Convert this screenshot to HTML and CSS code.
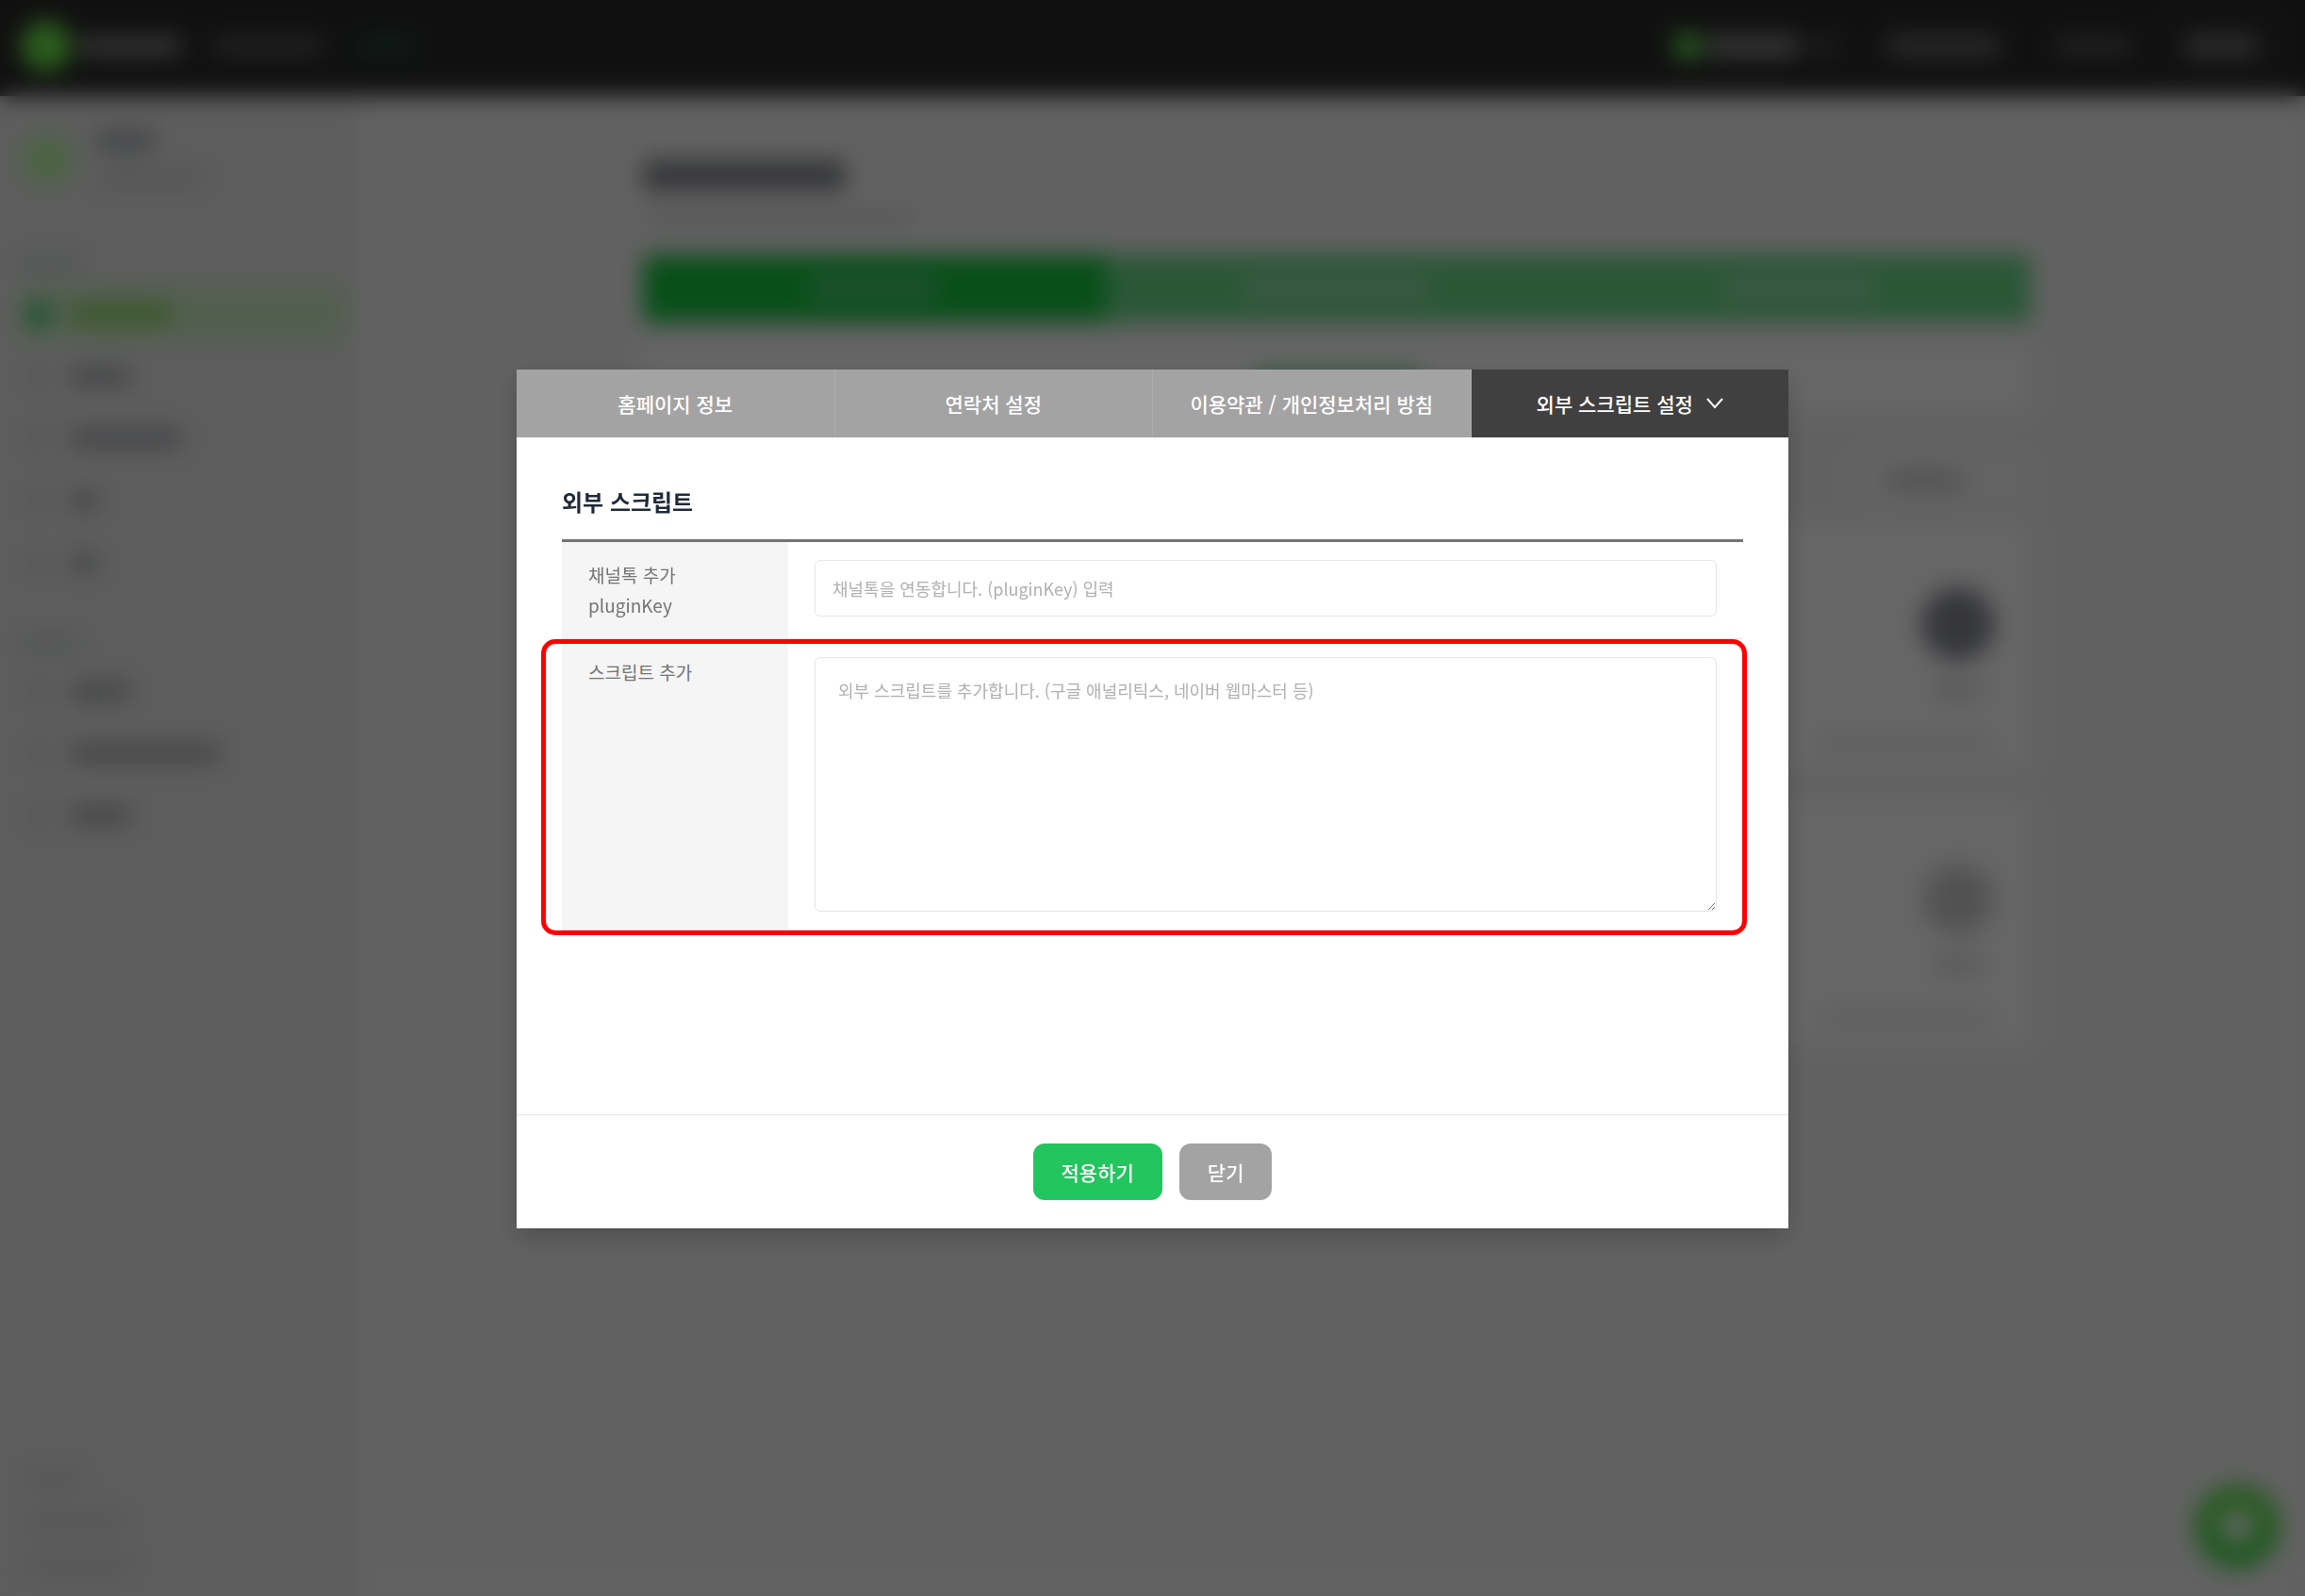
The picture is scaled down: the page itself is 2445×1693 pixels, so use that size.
FILE: index.html
```html
<!DOCTYPE html>
<html lang="ko">
<head>
    <meta charset="UTF-8">
    <meta name="viewport" content="width=device-width, initial-scale=1.0">
    <title>외부 스크립트 설정</title>
    <link rel="stylesheet" href="styles.css">
</head>
<body>
    <!-- Page behind the dialog -->
    <div class="page" aria-hidden="true">
        <header class="topbar">
            <span class="logo"></span>
            <span class="bar brand"></span>
            <span class="bar site-name"></span>
            <span class="bar plan"></span>
            <div class="topbar-right">
                <span class="points-dot"></span>
                <span class="bar points"></span>
                <span class="bar unit"></span>
                <span class="bar guide"></span>
                <span class="bar account"></span>
                <span class="logout"><span class="bar"></span></span>
            </div>
        </header>

        <div class="layout">
            <aside class="sidebar">
                <div class="profile">
                    <span class="avatar"></span>
                    <div class="profile-text">
                        <span class="bar name"></span>
                        <span class="bar mail"></span>
                    </div>
                </div>
                <div class="menu-title"><span class="bar"></span></div>
                <ul class="menu">
                    <li class="active"><i></i><span class="bar w110"></span></li>
                    <li><i></i><span class="bar w65"></span></li>
                    <li><i></i><span class="bar w120"></span></li>
                    <li><i></i><span class="bar w30"></span></li>
                    <li><i></i><span class="bar w30"></span></li>
                </ul>
                <div class="menu-title second"><span class="bar"></span></div>
                <ul class="menu">
                    <li><i></i><span class="bar w65"></span></li>
                    <li><i></i><span class="bar w160"></span></li>
                    <li><i></i><span class="bar w65"></span></li>
                </ul>
                <div class="sidebar-footer">
                    <span class="bar w65"></span>
                    <span class="bar w110"></span>
                    <span class="bar w120"></span>
                </div>
            </aside>

            <main class="main">
                <div class="content">
                    <div class="page-title"></div>
                    <div class="bar page-desc"></div>
                    <div class="page-tabs">
                        <div class="active"><span class="bar w140"></span></div>
                        <div><span class="bar w200"></span></div>
                        <div><span class="bar w160"></span></div>
                    </div>
                    <div class="notice"><span class="bar"></span></div>
                    <div class="filter"><span class="bar"></span></div>
                    <div class="card">
                        <div class="card-side">
                            <span class="circle dark"></span>
                            <span class="bar"></span>
                        </div>
                        <span class="bar card-date"></span>
                    </div>
                    <div class="card">
                        <div class="card-side">
                            <span class="circle"></span>
                            <span class="bar"></span>
                        </div>
                        <span class="bar card-date"></span>
                    </div>
                </div>
            </main>
        </div>
        <div class="chat"><span></span></div>
    </div>

    <!-- Dialog -->
    <div class="overlay">
        <form class="modal" role="dialog" aria-labelledby="modal-title">
            <nav class="tabs">
                <button type="button">홈페이지 정보</button>
                <button type="button">연락처 설정</button>
                <button type="button">이용약관 / 개인정보처리 방침</button>
                <button type="button" class="active">
                    외부 스크립트 설정
                    <svg width="18" height="12" viewBox="0 0 18 12" fill="none" stroke="#fff" stroke-width="2"><path d="M1 1l8 9 8-9"/></svg>
                </button>
            </nav>
            <div class="modal-body">
                <h2 id="modal-title">외부 스크립트</h2>
                <div class="form-table">
                    <div class="form-row">
                        <label for="plugin_key">채널톡 추가<br>pluginKey</label>
                        <div class="field">
                            <input type="text" id="plugin_key" name="plugin_key" placeholder="채널톡을 연동합니다. (pluginKey) 입력">
                        </div>
                    </div>
                    <div class="form-row highlighted">
                        <label for="script">스크립트 추가</label>
                        <div class="field">
                            <textarea id="script" name="script" placeholder="외부 스크립트를 추가합니다. (구글 애널리틱스, 네이버 웹마스터 등)"></textarea>
                        </div>
                    </div>
                </div>
            </div>
            <div class="modal-footer">
                <button type="submit" class="btn btn-primary">적용하기</button>
                <button type="button" class="btn">닫기</button>
            </div>
        </form>
    </div>
</body>
</html>
```
FILE: styles.css
```css
* {
    box-sizing: border-box;
}
body {
    margin: 0;
    font-family: "Noto Sans CJK KR", "Noto Sans", sans-serif;
    background: #f3f3f3;
    overflow: hidden;
}
button,
input,
textarea {
    font-family: inherit;
}

/* page behind */
.page {
    display: flex;
    flex-direction: column;
    height: 100vh;
}
.bar {
    display: block;
    height: 20px;
    border-radius: 10px;
    background: #acaeb3;
}
.w30 { width: 30px; }
.w65 { width: 65px; }
.w110 { width: 110px; }
.w120 { width: 120px; }
.w140 { width: 140px; }
.w160 { width: 160px; }
.w200 { width: 200px; }

.topbar {
    display: flex;
    align-items: center;
    flex: none;
    height: 102px;
    padding: 0 24px 4px 22px;
    background: #2a2a2a;
}
.logo {
    width: 54px;
    height: 54px;
    border-radius: 50%;
    background: #6fe84c;
}
.brand {
    width: 112px;
    height: 24px;
    margin-left: 6px;
    background: #787878;
}
.site-name {
    width: 120px;
    margin-left: 30px;
    background: #565656;
}
.plan {
    width: 60px;
    margin-left: 36px;
    background: #22483b;
}
.topbar-right {
    display: flex;
    align-items: center;
    margin-left: auto;
}
.points-dot {
    width: 30px;
    height: 30px;
    border-radius: 50%;
    background: #67e855;
}
.points {
    width: 100px;
    height: 24px;
    margin-left: 4px;
    background: #868686;
}
.unit {
    width: 36px;
    margin-left: 8px;
    background: #484848;
}
.guide {
    width: 124px;
    height: 24px;
    margin-left: 46px;
    background: #666;
}
.account {
    width: 84px;
    margin-left: 56px;
    background: #555;
}
.logout {
    margin-left: 28px;
    padding: 20px 24px;
    border: 1px solid #555;
    border-radius: 8px;
}
.logout .bar {
    width: 80px;
    height: 24px;
    background: #707070;
}

.layout {
    display: flex;
    flex: 1;
}
.sidebar {
    display: flex;
    flex-direction: column;
    width: 378px;
    padding: 37px 11px 23px 18px;
    background: #e8e8e8;
}
.profile {
    display: flex;
    align-items: center;
    gap: 22px;
    height: 60px;
    padding-left: 4px;
}
.avatar {
    width: 56px;
    height: 56px;
    border-radius: 50%;
    background: #bdf8aa;
}
.name {
    width: 66px;
    margin-bottom: 20px;
    background: #a8abb0;
}
.mail {
    width: 118px;
    background: #d6d6d6;
}
.menu-title {
    margin-top: 70px;
    margin-bottom: 14px;
}
.menu-title.second {
    margin-top: 46px;
    margin-bottom: 10px;
}
.menu-title .bar {
    width: 70px;
    background: #d2d6d8;
}
.menu {
    display: flex;
    flex-direction: column;
    gap: 6px;
    margin: 0;
    padding: 0;
    list-style: none;
}
.menu li {
    display: flex;
    align-items: center;
    gap: 22px;
    height: 60px;
    padding: 0 12px;
    border-radius: 8px;
}
.menu i {
    width: 22px;
    height: 22px;
    border-radius: 6px;
    background: #d2d4d4;
}
.menu .active {
    background: #cdeec6;
}
.menu .active i {
    background: #22c55e;
}
.menu .active .bar {
    background: #90d864;
}
.sidebar-footer {
    display: flex;
    flex-direction: column;
    gap: 26px;
    margin-top: auto;
    padding-left: 6px;
}
.sidebar-footer .bar {
    background: #d8d8d8;
}

.main {
    flex: 1;
    padding: 68px 0 0 13px;
}
.content {
    max-width: 1472px;
    margin: 0 auto;
}
.page-title {
    width: 215px;
    height: 32px;
    border-radius: 6px;
    background: #85878c;
}
.page-desc {
    width: 290px;
    margin-top: 18px;
    margin-bottom: 30px;
    background: #dedfdf;
}
.page-tabs {
    display: flex;
    height: 72px;
    border-radius: 8px;
    background: #6bd989;
    overflow: hidden;
}
.page-tabs div {
    display: flex;
    flex: 1;
    align-items: center;
    justify-content: center;
}
.page-tabs .bar {
    background: #a4deb0;
}
.page-tabs .active {
    background: #16c541;
}
.page-tabs .active .bar {
    background: #60c87c;
}
.notice {
    display: flex;
    justify-content: center;
    height: 72px;
    margin-top: 24px;
    padding-top: 26px;
    border-radius: 8px;
    background: #fff;
}
.notice .bar {
    width: 180px;
    background: #7fd4a0;
}
.filter {
    width: 190px;
    height: 64px;
    margin: 40px 0 14px auto;
    padding: 22px 36px;
    border-radius: 8px;
    background: #f7f7f7;
}
.filter .bar {
    width: 84px;
    background: #c8ccc9;
}
.card {
    display: flex;
    flex-direction: column;
    align-items: flex-end;
    height: 260px;
    margin-bottom: 32px;
    padding: 67px 38px 0;
    border-radius: 8px;
    background: #fff;
}
.card-side {
    display: flex;
    flex-direction: column;
    align-items: center;
    gap: 20px;
}
.card-side .bar {
    width: 54px;
    background: #dedede;
}
.card-date {
    width: 190px;
    margin-top: 38px;
    background: #efefef;
}
.circle {
    width: 78px;
    height: 78px;
    border-radius: 50%;
    background: radial-gradient(#c4c4c4, #e0e0e0);
}
.circle.dark {
    background: #888a93;
}
.chat {
    position: fixed;
    right: 26px;
    bottom: 28px;
    display: flex;
    align-items: center;
    justify-content: center;
    width: 92px;
    height: 92px;
    border-radius: 50%;
    background: linear-gradient(#74e45c, #4cda58);
}
.chat span {
    width: 32px;
    height: 32px;
    border-radius: 50%;
    background: #fff;
}

/* dialog */
.overlay {
    position: fixed;
    inset: 0;
    display: flex;
    align-items: center;
    justify-content: center;
    padding-top: 2px;
    background: rgba(0, 0, 0, 0.6);
    backdrop-filter: blur(12px);
}
.modal {
    width: 1349px;
    max-width: 96%;
    background: #fff;
    box-shadow: 0 10px 24px rgba(0, 0, 0, 0.2);
}
.tabs {
    display: flex;
}
.tabs button {
    display: flex;
    flex: 1;
    align-items: center;
    justify-content: center;
    gap: 14px;
    height: 72px;
    padding: 0;
    border: none;
    border-right: 1px solid #adadad;
    background: #a3a3a3;
    color: #fff;
    font-size: 21px;
    font-weight: 500;
    white-space: nowrap;
    cursor: pointer;
}
.tabs .active {
    border-right: none;
    background: #404040;
}
.modal-body {
    min-height: 718px;
    padding: 48px;
}
.modal-body h2 {
    margin: 0 0 20px;
    color: #1f2937;
    font-size: 24px;
    font-weight: 700;
    line-height: 40px;
}
.form-table {
    border-top: 3px solid #737373;
}
.form-row {
    display: flex;
    border-bottom: 1px solid #e5e5e5;
}
.form-row label {
    flex: none;
    width: 240px;
    padding: 19px 28px;
    background: #f5f5f5;
    color: #737373;
    font-size: 19px;
    line-height: 32px;
}
.field {
    flex: 1;
    padding: 19px 28px;
}
.field input,
.field textarea {
    display: block;
    width: 100%;
    border: 1px solid #e5e5e5;
    border-radius: 6px;
    background: #fff;
    color: #404040;
    font-size: 18px;
}
.field input {
    height: 60px;
    padding: 0 18px;
}
.field textarea {
    height: 270px;
    padding: 18px 24px;
    line-height: 32px;
}
.field ::placeholder {
    color: #b0b0b0;
}
.highlighted {
    position: relative;
}
.highlighted::after {
    content: "";
    position: absolute;
    inset: 0 -4px -6px -22px;
    border: 5px solid #f00;
    border-radius: 15px;
    pointer-events: none;
}
.modal-footer {
    display: flex;
    justify-content: center;
    gap: 18px;
    padding: 30px;
    border-top: 1px solid #e5e5e5;
}
.btn {
    height: 60px;
    padding: 0 30px;
    border: none;
    border-radius: 12px;
    background: #a3a3a3;
    color: #fff;
    font-size: 21px;
    font-weight: 500;
    cursor: pointer;
}
.btn-primary {
    background: #22c55e;
}
```
